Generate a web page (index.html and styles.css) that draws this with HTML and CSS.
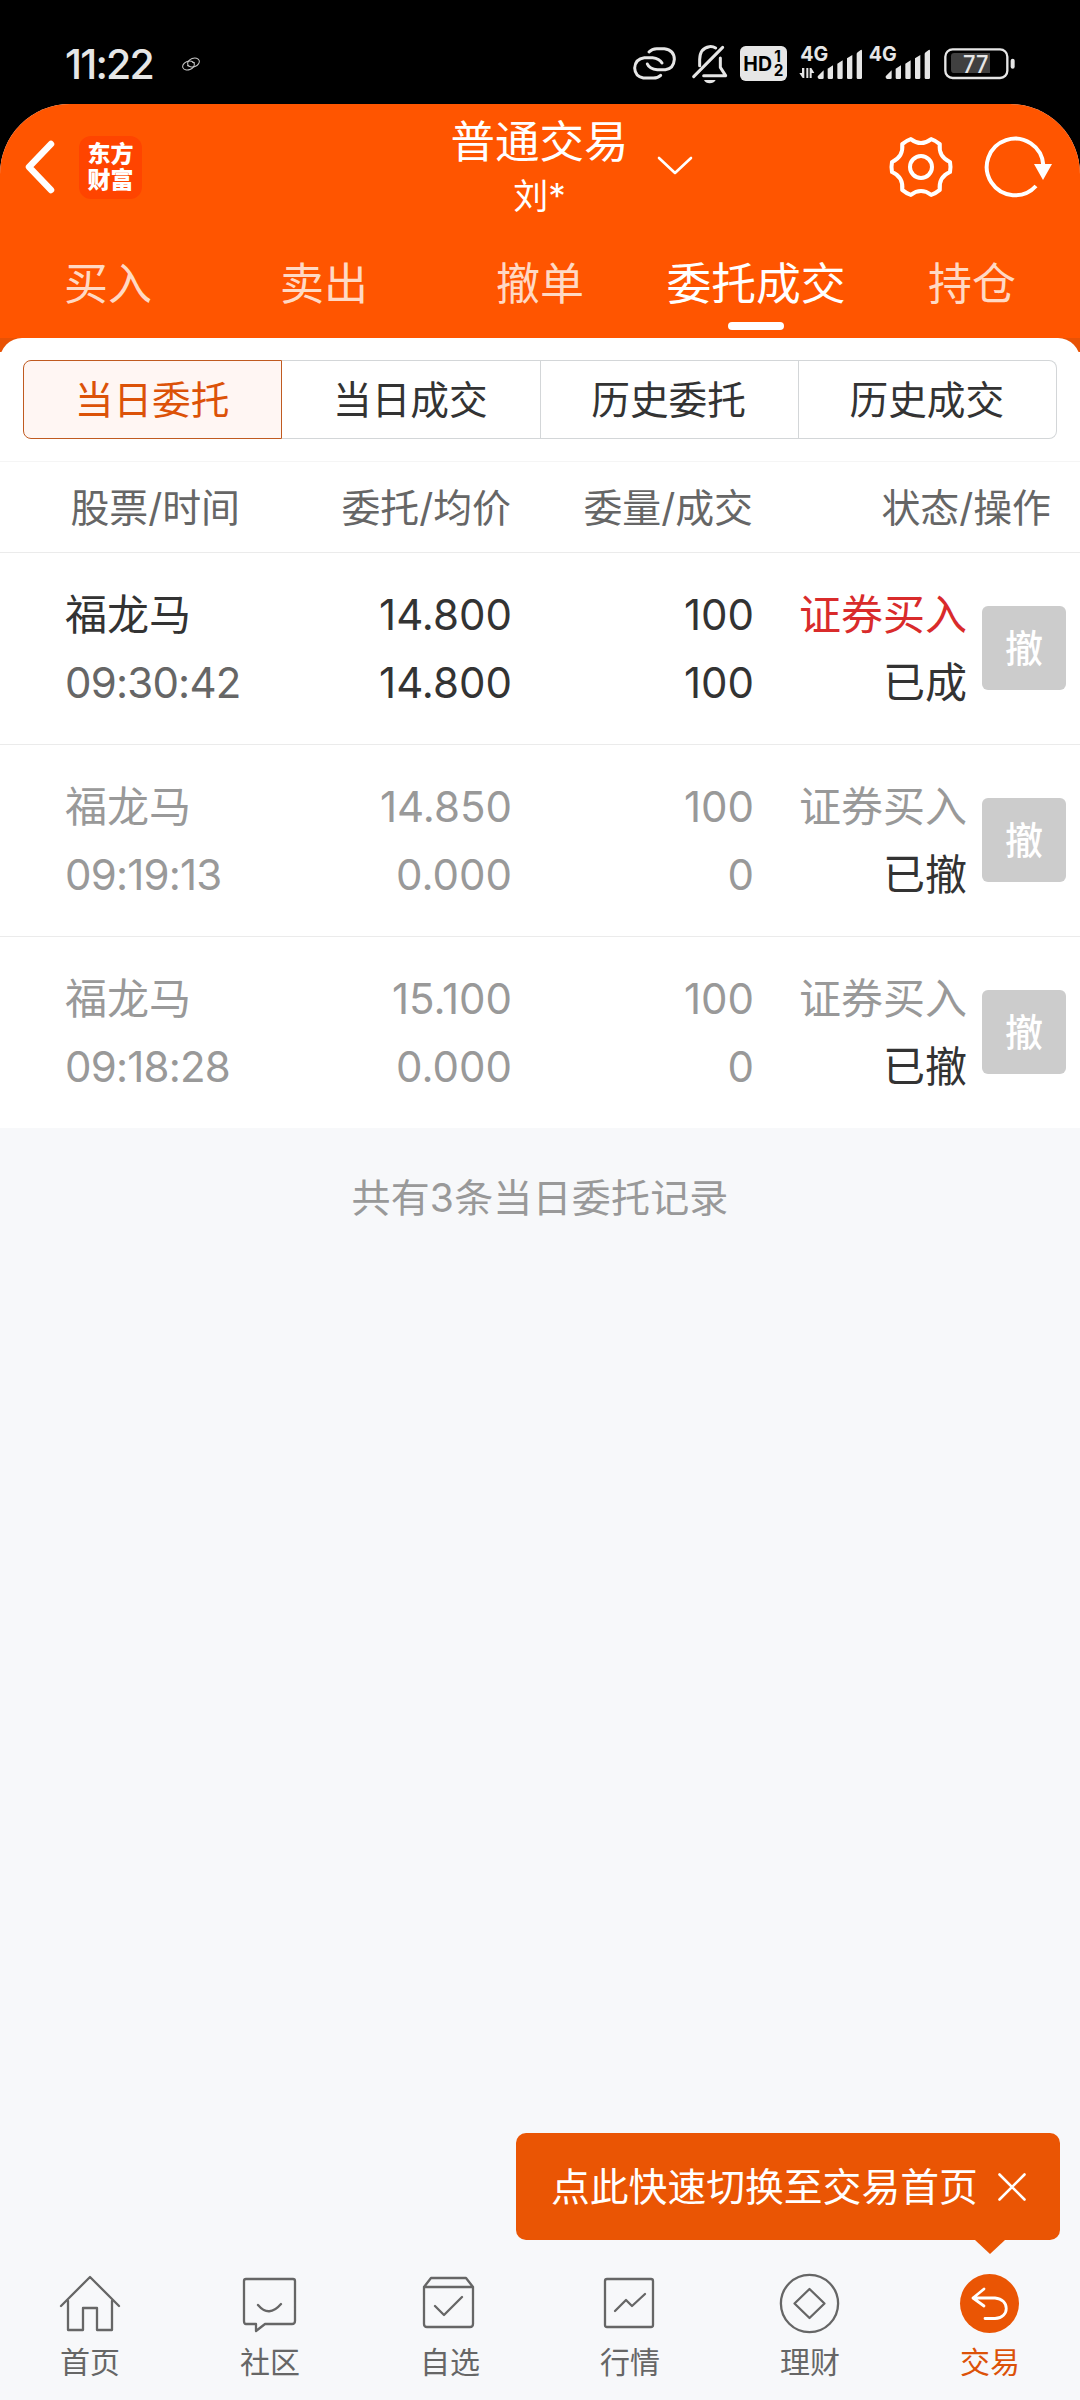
FILE: index.html
```html
<!DOCTYPE html>
<html lang="zh-CN">
<head>
  <meta charset="UTF-8">
  <meta name="viewport" content="width=device-width, initial-scale=1.0">
  <title>普通交易</title>
  <link rel="stylesheet" href="styles.css">
</head>
<body>
  <!-- 状态栏 -->
  <div class="status-bar">
    <span class="clock">11:22</span>
    <svg class="mini-link" viewBox="0 0 18 14" fill="none" stroke="#c8c8c8" stroke-width="1">
      <ellipse cx="6.5" cy="8.5" rx="6" ry="4.2" transform="rotate(-20 6.5 8.5)"/>
      <ellipse cx="11.5" cy="5.5" rx="6" ry="4.2" transform="rotate(-20 11.5 5.5)"/>
      <path d="M5 8.5l3 1M10 5l3 1"/>
    </svg>
    <svg class="status-icons" viewBox="0 0 1260 210">
      <g fill="none" stroke="#e6e6e6" stroke-width="9" stroke-linecap="round" stroke-linejoin="round">
        <path d="M87 66 Q96 56 110 56 H133 Q163 60 163 88 Q161 116 136 119 H112 Q88 117 82 102"/>
        <path d="M122 136 Q114 144 100 144 H70 Q45 139 44 114 Q46 86 73 83 H98 Q118 85 126 99"/>
        <path d="M221 140 L308 52"/>
        <path d="M239 107 V88 Q240 54 268 50 Q279 49 287 54"/>
        <path d="M301 84 V112 L317 137 H251"/>
      </g>
      <path d="M252 150 H287 Q281 160 269 160 Q257 160 252 150Z" fill="#e6e6e6"/>
      <rect x="360" y="48" width="141" height="105" rx="17" fill="#e6e6e6"/>
      <text x="370" y="122" class="st-hd" textLength="86" lengthAdjust="spacingAndGlyphs">HD</text>
      <text x="463" y="95" class="st-sim">1</text>
      <text x="461" y="139" class="st-sim">2</text>
      <text x="541" y="93" class="st-net" textLength="84" lengthAdjust="spacingAndGlyphs">4G</text>
      <text x="746" y="93" class="st-net" textLength="84" lengthAdjust="spacingAndGlyphs">4G</text>
      <g fill="#e6e6e6">
        <path d="M546 114h7v30h-5l-10-15h8zM559 114h6v30h-6zM569 114h5l9 15h-8v15h-6z"/>
        <path id="bars" d="M593 139 L611 121 V144 Q611 147 607 147 H597 Q592 147 593 139Z
          M623 116 L639 106 V143 Q639 147 635 147 H627 Q623 147 623 143Z
          M652 101 L668 91 V143 Q668 147 664 147 H656 Q652 147 652 143Z
          M681 85 L697 75 V143 Q697 147 693 147 H685 Q681 147 681 143Z
          M710 72 Q710 69 713 67 L722 60 Q726 58 726 63 V143 Q726 147 722 147 H714 Q710 147 710 143Z"/>
        <use href="#bars" x="204"/>
      </g>
      <rect x="976" y="58" width="186" height="86" rx="22" fill="none" stroke="#e6e6e6" stroke-width="7"/>
      <path d="M1003 69 H1110 V129 H1003 Q993 129 993 119 V79 Q993 69 1003 69Z" fill="#404040"/>
      <rect x="1172" y="86" width="12" height="30" rx="6" fill="#e6e6e6"/>
      <text x="1029" y="129" class="st-bat" textLength="76" lengthAdjust="spacingAndGlyphs">77</text>
    </svg>
  </div>

  <div class="app">
    <!-- 顶部标题 -->
    <div class="header">
      <div class="title-bar">
        <div class="side left">
          <svg class="back" viewBox="0 0 32 56"><path d="M27 5L5 28L27 51" fill="none" stroke="#fff" stroke-width="6.5" stroke-linecap="round" stroke-linejoin="round"/></svg>
          <div class="logo"><span>东方</span><span>财富</span></div>
        </div>
        <div class="account">
          <div class="account-type">普通交易</div>
          <div class="account-name">刘*</div>
        </div>
        <svg class="chevron" viewBox="0 0 36 20"><path d="M2 2L18 17L34 2" fill="none" stroke="#fff" stroke-width="2.6" stroke-linecap="round" stroke-linejoin="round"/></svg>
        <div class="side right">
          <svg class="gear" viewBox="-33 -33 66 66" fill="none" stroke="#fff" stroke-width="4" stroke-linejoin="round">
            <path d="M29 -5Q30 0 29 5Q17.3 10 18.8 22.9Q14.5 26.5 10.2 27.9Q0 20 -10.2 27.9Q-14.5 26.5 -18.8 22.9Q-17.3 10 -29 5Q-30 0 -29 -5Q-17.3 -10 -18.8 -22.9Q-14.5 -26.5 -10.2 -27.9Q0 -20 10.2 -27.9Q14.5 -26.5 18.8 -22.9Q17.3 -10 29 -5Z"/>
            <circle r="11"/>
          </svg>
          <svg class="refresh" viewBox="-33 -33 72 66">
            <path d="M21 19A28.3 28.3 0 1 1 28.3 -2" fill="none" stroke="#fff" stroke-width="4"/>
            <path d="M19 -3H37L28 13Z" fill="#fff"/>
          </svg>
        </div>
      </div>
      <div class="tabs">
        <div class="tab">买入</div>
        <div class="tab">卖出</div>
        <div class="tab">撤单</div>
        <div class="tab active">委托成交</div>
        <div class="tab">持仓</div>
      </div>
    </div>
    <div class="panel-top"><div class="panel-cap"></div></div>

    <div class="panel">
      <div class="segment">
        <div class="seg active">当日委托</div>
        <div class="seg">当日成交</div>
        <div class="seg">历史委托</div>
        <div class="seg">历史成交</div>
      </div>

      <!-- 委托列表 -->
      <div class="list-head">
        <div>股票/时间</div>
        <div>委托/均价</div>
        <div>委量/成交</div>
        <div>状态/操作</div>
      </div>
      <div class="order">
        <div class="cell name"><span>福龙马</span><span class="time">09:30:42</span></div>
        <div class="cell"><span>14.800</span><span>14.800</span></div>
        <div class="cell"><span>100</span><span>100</span></div>
        <div class="cell"><span class="buy">证券买入</span><span class="state">已成</span></div>
        <div class="cancel">撤</div>
      </div>
      <div class="order done">
        <div class="cell name"><span>福龙马</span><span class="time">09:19:13</span></div>
        <div class="cell"><span>14.850</span><span>0.000</span></div>
        <div class="cell"><span>100</span><span>0</span></div>
        <div class="cell"><span class="buy">证券买入</span><span class="state">已撤</span></div>
        <div class="cancel">撤</div>
      </div>
      <div class="order done">
        <div class="cell name"><span>福龙马</span><span class="time">09:18:28</span></div>
        <div class="cell"><span>15.100</span><span>0.000</span></div>
        <div class="cell"><span>100</span><span>0</span></div>
        <div class="cell"><span class="buy">证券买入</span><span class="state">已撤</span></div>
        <div class="cancel">撤</div>
      </div>
    </div>

    <div class="summary">共有3条当日委托记录</div>

    <!-- 底部导航 -->
    <div class="nav">
      <div class="nav-item">
        <svg viewBox="0 0 64 64">
          <path d="M3 35L32 6L61 35M10 30V59H25V37H39V59H54V30"/>
        </svg>
        <span>首页</span>
      </div>
      <div class="nav-item">
        <svg viewBox="0 0 64 64">
          <path d="M8 8H55Q57 8 57 10V50Q57 53 54 53H27L18 60V53H8Q6 53 6 50V10Q6 8 8 8M20 34Q31 47 43 33"/>
        </svg>
        <span>社区</span>
      </div>
      <div class="nav-item">
        <svg viewBox="0 0 64 64">
          <path d="M6 16L13 7H48L55 16M6 16V53Q6 56 9 56H52Q55 56 55 53V16ZM17 35L26 44L44 26"/>
        </svg>
        <span>自选</span>
      </div>
      <div class="nav-item">
        <svg viewBox="0 0 64 64">
          <rect x="7" y="8" width="48" height="48" rx="2"/>
          <path d="M17 40L28 29L34 35L47 23"/>
        </svg>
        <span>行情</span>
      </div>
      <div class="nav-item">
        <svg viewBox="0 0 64 64">
          <circle cx="31.5" cy="32.5" r="28.6"/>
          <path d="M31.5 18L46.5 32.5L31.5 47L16.5 32.5Z"/>
        </svg>
        <span>理财</span>
      </div>
      <div class="nav-item active">
        <svg viewBox="0 0 64 64">
          <circle class="disc" cx="31.5" cy="32.5" r="29.5"/>
          <path class="arrow" d="M26 18L15 27L26 35M15 27H37C52 28 52 47 37 47.5H27"/>
        </svg>
        <span>交易</span>
      </div>
    </div>

    <div class="tip">
      <span class="tip-text">点此快速切换至交易首页</span>
      <svg class="tip-close" viewBox="0 0 28 28"><path d="M1.5 1.5L26.5 26.5M26.5 1.5L1.5 26.5" stroke="#fff" stroke-width="2.6" stroke-linecap="round"/></svg>
    </div>
  </div>
</body>
</html>
```
FILE: styles.css
```css
* {
  box-sizing: border-box;
}
body {
  margin: 0;
  width: 1080px;
  height: 2400px;
  display: flex;
  flex-direction: column;
  background: #000;
  font-family: Inter, "Noto Sans CJK SC", sans-serif;
  color: #333;
  overflow: hidden;
}

/* 状态栏 */
.status-bar {
  height: 104px;
  flex: none;
  display: flex;
  align-items: flex-start;
  padding-left: 65px;
}
.clock {
  width: 117px;
  padding-top: 39px;
  font-size: 41px;
  line-height: 50px;
  font-weight: 500;
  letter-spacing: -1.8px;
  color: #e6e6e6;
}
.mini-link {
  width: 18px;
  height: 14px;
  margin-top: 57px;
}
.status-icons {
  width: 420px;
  height: 70px;
  margin: 30px 40px 0 auto;
}
.st-hd {
  font-size: 62px;
  font-weight: 700;
}
.st-sim {
  font-size: 46px;
  font-weight: 700;
}
.st-net {
  font-size: 62px;
  font-weight: 700;
  fill: #e6e6e6;
}
.st-bat {
  font-size: 74px;
  font-weight: 500;
  fill: #e6e6e6;
}

.app {
  position: relative;
  flex: 1;
  display: flex;
  flex-direction: column;
  background: #f7f8fa;
  border-radius: 70px 70px 0 0;
  overflow: hidden;
}

/* 顶部 */
.header {
  height: 234px;
  flex: none;
  background: #ff5500;
  color: #fff;
}
.title-bar {
  height: 126px;
  display: flex;
  justify-content: center;
}
.side {
  flex: 1;
  display: flex;
  align-items: center;
}
.side.left {
  padding-left: 24px;
}
.side.right {
  justify-content: flex-end;
  padding-right: 26px;
}
.back {
  width: 32px;
  height: 56px;
}
.logo {
  width: 63px;
  height: 63px;
  margin-left: 23px;
  display: flex;
  flex-direction: column;
  align-items: center;
  justify-content: center;
  border-radius: 12px;
  background: #ff4400;
  font-size: 23px;
  line-height: 26px;
  font-weight: 900;
}
.account {
  width: 180px;
  margin-left: 64px;
  padding-top: 11px;
  text-align: center;
}
.account-type {
  font-size: 44.5px;
  line-height: 54px;
}
.account-name {
  font-size: 35px;
  line-height: 54px;
}
.chevron {
  width: 36px;
  height: 20px;
  margin: 52px 0 0 27px;
}
.gear {
  width: 66px;
  height: 66px;
}
.refresh {
  width: 72px;
  height: 66px;
  margin-left: 28px;
}
.tabs {
  display: flex;
}
.tab {
  flex: 1;
  display: flex;
  flex-direction: column;
  align-items: center;
  font-size: 44px;
  line-height: 60px;
  padding-top: 24px;
  white-space: nowrap;
  color: #ffd9c4;
}
.tab.active {
  color: #fff;
  font-size: 44.8px;
}
.tab.active::after {
  content: "";
  width: 56px;
  height: 8px;
  margin-top: 8px;
  border-radius: 4px;
  background: #fff;
}
.panel-top {
  height: 14px;
  flex: none;
  background: #e85205;
  overflow: hidden;
}
.panel-cap {
  height: 40px;
  border-radius: 22px 22px 0 0;
  background: #fff;
}
.panel {
  background: #fff;
}

.segment {
  display: flex;
  height: 109px;
  padding: 8px 23px 22px;
}
.seg {
  flex: 1;
  display: flex;
  align-items: center;
  justify-content: center;
  padding: 0 1px 6px 0;
  border: 1px solid #d3d6d8;
  border-left-width: 0;
  font-size: 38.7px;
}
.seg:last-child {
  border-radius: 0 8px 8px 0;
}
.seg.active {
  border: 1px solid #c05a20;
  border-radius: 8px 0 0 8px;
  background: #fff6f3;
  color: #dc5208;
}

/* 列表 */
.list-head {
  height: 92px;
  display: grid;
  grid-template-columns: 240px 271px 242px 298px;
  align-items: center;
  padding-bottom: 5px;
  border-top: 1px solid #f5f5f5;
  border-bottom: 1px solid #ebebeb;
  font-size: 38.9px;
  text-align: right;
  color: #666;
}
.order {
  height: 192px;
  display: grid;
  grid-template-columns: 240px 272px 242px 213px 84px;
  align-items: center;
  border-bottom: 1px solid #ebebeb;
}
.order:last-child {
  border-bottom: 0;
  height: 191px;
}
.cell {
  display: flex;
  flex-direction: column;
  text-align: right;
  font-size: 42px;
  line-height: 68px;
  white-space: nowrap;
}
.name {
  padding-left: 65px;
  text-align: left;
}
.time {
  color: #666;
  letter-spacing: -0.8px;
}
.buy {
  color: #d92b2b;
}
.done .cell,
.done .time,
.done .buy {
  color: #999;
}
.order .state {
  color: #333;
}
.cancel {
  width: 84px;
  height: 84px;
  margin: 0 0 2px 15px;
  padding-bottom: 5px;
  display: flex;
  align-items: center;
  justify-content: center;
  border-radius: 6px;
  background: #ccc;
  color: #fff;
  font-size: 38px;
  font-weight: 500;
}
.summary {
  padding-top: 45px;
  text-align: center;
  font-size: 39px;
  line-height: 50px;
  letter-spacing: 0.2px;
  color: #999;
}

/* 底部导航 */
.nav {
  height: 129px;
  margin-top: auto;
  display: flex;
}
.nav-item {
  flex: 1;
  display: flex;
  flex-direction: column;
  align-items: center;
  font-size: 30px;
  line-height: 40px;
  color: #666;
}
.nav-item svg {
  width: 64px;
  height: 64px;
  margin-bottom: 7px;
  fill: none;
  stroke: #666;
  stroke-width: 2.3;
  stroke-linejoin: round;
  stroke-linecap: round;
}
.nav-item.active {
  color: #dc5208;
}
.nav-item .disc {
  fill: #ea5504;
  stroke: none;
}
.nav-item .arrow {
  stroke: #fff;
  stroke-width: 2.8;
}

/* 气泡提示 */
.tip {
  position: absolute;
  right: 20px;
  bottom: 160px;
  width: 544px;
  height: 107px;
  padding: 0 34px 0 35px;
  display: flex;
  align-items: center;
  justify-content: space-between;
  border-radius: 10px;
  background: #ea5504;
  color: #fff;
  font-size: 38.8px;
  white-space: nowrap;
}
.tip-text {
  padding-bottom: 6px;
}
.tip::after {
  content: "";
  position: absolute;
  right: 55px;
  top: 100%;
  border: 15px solid transparent;
  border-top: 14px solid #ea5504;
  border-bottom: 0;
}
.tip-close {
  width: 28px;
  height: 28px;
}
```
